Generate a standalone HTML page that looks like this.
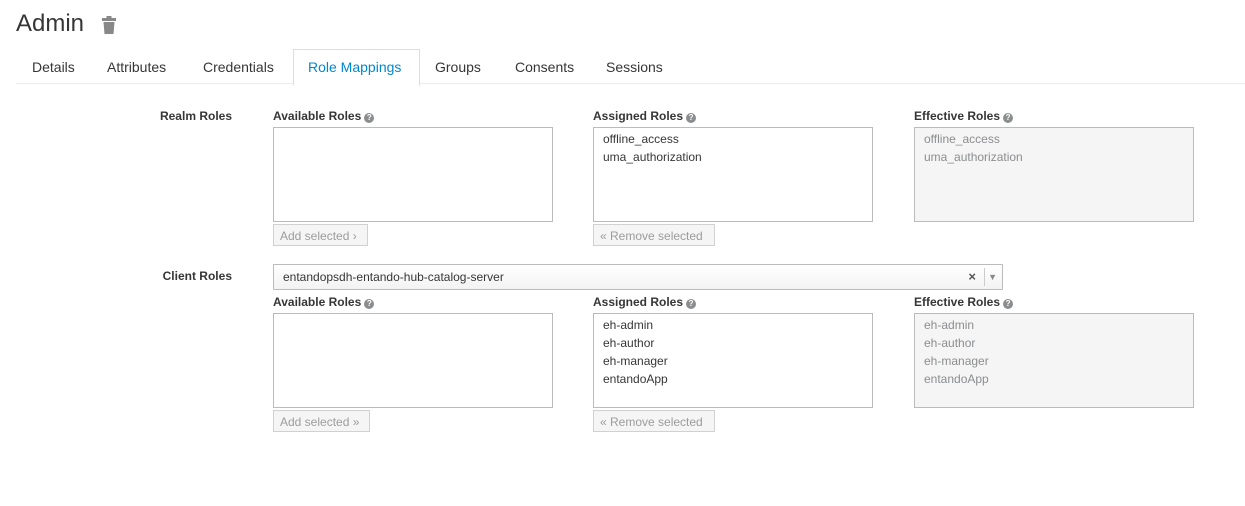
<!DOCTYPE html>
<html><head><style>
body{margin:0;width:1245px;height:506px;background:#fff;font-family:"Liberation Sans",sans-serif;color:#363636;position:relative;overflow:hidden}
.a{position:absolute;white-space:nowrap}
.t{font-size:14px;top:59px;color:#363636}
.lb{font-size:12px;font-weight:bold;color:#363636}
.q{display:inline-block;width:10px;height:10px;border-radius:50%;background:#8b8d8f;color:#fff;font-size:8px;line-height:10px;text-align:center;vertical-align:0px;margin-left:3px;font-weight:bold}
.box{position:absolute;width:278px;height:93px;border:1px solid #bbb;background:#fff;font-size:12px;line-height:18px;padding:0;box-sizing:content-box}
.box div{padding-left:9px}
.eff{background:#f5f5f5;color:#8b8d8f;border-color:#bbb}
.btn{position:absolute;height:22px;border:1px solid #d1d1d1;background:#f5f5f5;color:#9c9c9c;font-size:12px;line-height:22px;padding:0 6px;box-sizing:border-box}
</style></head><body>
<div class="a" style="left:16px;top:10px;font-size:24px;color:#363636">Admin</div>
<svg class="a" style="left:101px;top:16px" width="16" height="18" viewBox="0 0 16 18"><rect x="1" y="2" width="14" height="3" fill="#888"/><rect x="5.5" y="0" width="5" height="3" fill="#888"/><path d="M2.5 6h11l-1 12h-9z" fill="#888"/></svg>
<div class="a" style="left:16px;top:83px;width:1229px;height:1px;background:#ededed"></div>
<div class="a" style="left:293px;top:49px;width:125px;height:35px;border:1px solid #ddd;border-bottom:1px solid #fff;background:#fff"></div>
<div class="a t" style="left:32px">Details</div>
<div class="a t" style="left:107px">Attributes</div>
<div class="a t" style="left:203px">Credentials</div>
<div class="a t" style="left:308px;color:#0088ce">Role Mappings</div>
<div class="a t" style="left:435px">Groups</div>
<div class="a t" style="left:515px">Consents</div>
<div class="a t" style="left:606px">Sessions</div>

<div class="a lb" style="right:1013px;top:109px">Realm Roles</div>
<div class="a lb" style="left:273px;top:109px">Available Roles<span class="q">?</span></div>
<div class="a lb" style="left:593px;top:109px">Assigned Roles<span class="q">?</span></div>
<div class="a lb" style="left:914px;top:109px">Effective Roles<span class="q">?</span></div>
<div class="box" style="left:273px;top:127px"></div>
<div class="box" style="left:593px;top:127px;padding-top:2px;height:91px"><div>offline_access</div><div>uma_authorization</div></div>
<div class="box eff" style="left:914px;top:127px;padding-top:2px;height:91px"><div>offline_access</div><div>uma_authorization</div></div>
<div class="btn" style="left:273px;top:224px;width:95px">Add selected ›</div>
<div class="btn" style="left:593px;top:224px;width:122px">« Remove selected</div>

<div class="a lb" style="right:1013px;top:269px">Client Roles</div>
<div class="a" style="left:273px;top:264px;width:728px;height:24px;border:1px solid #bbb;border-radius:1px;background:linear-gradient(#fff,#f3f3f3);font-size:12px;line-height:24px"><span style="padding-left:9px">entandopsdh-entando-hub-catalog-server</span>
<span class="a" style="right:26px;top:0;color:#555;font-size:13px;font-weight:bold">×</span>
<span class="a" style="right:17px;top:3px;width:1px;height:18px;background:#ccc"></span>
<span class="a" style="right:5px;top:0;color:#888;font-size:9px">▼</span></div>

<div class="a lb" style="left:273px;top:295px">Available Roles<span class="q">?</span></div>
<div class="a lb" style="left:593px;top:295px">Assigned Roles<span class="q">?</span></div>
<div class="a lb" style="left:914px;top:295px">Effective Roles<span class="q">?</span></div>
<div class="box" style="left:273px;top:313px"></div>
<div class="box" style="left:593px;top:313px;padding-top:2px;height:91px"><div>eh-admin</div><div>eh-author</div><div>eh-manager</div><div>entandoApp</div></div>
<div class="box eff" style="left:914px;top:313px;padding-top:2px;height:91px"><div>eh-admin</div><div>eh-author</div><div>eh-manager</div><div>entandoApp</div></div>
<div class="btn" style="left:273px;top:410px;width:97px">Add selected »</div>
<div class="btn" style="left:593px;top:410px;width:122px">« Remove selected</div>
</body></html>
